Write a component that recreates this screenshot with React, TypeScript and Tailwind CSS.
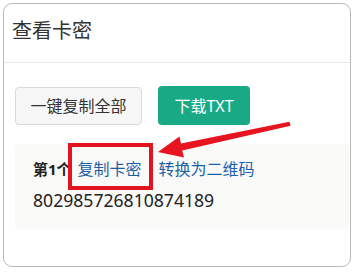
export default function App() {
  return (
    <div
      className="relative w-[354px] h-[272px] bg-white pt-[3px] pl-[3px] overflow-hidden"
      style={{ fontFamily: '"Noto Sans", "Noto Sans CJK SC", sans-serif' }}
    >
      <div className="w-[348px] h-[264px] border border-[#b8b8b8] rounded-[9px] bg-white">
        <div className="h-[59px] pl-[8px] pb-[4px] flex items-center border-b border-[#e6e6e6] text-[20px] text-[#333]">
          查看卡密
        </div>
        <div className="pl-[11px] pt-[24px]">
          <div className="flex gap-[16px]">
            <button className="h-[38px] w-[127px] rounded-[4px] border border-[#d9d9d9] bg-[#f6f6f6] text-[16px] text-[#333]">
              一键复制全部
            </button>
            <button className="h-[39px] w-[92px] -mt-px rounded-[4px] bg-[#1aa985] text-[16px] text-white">
              下载TXT
            </button>
          </div>
          <div className="mt-[19px] mr-[1px] h-[85px] rounded-[4px] bg-[#f9f9f8] pl-[18px] pt-[13px]">
            <div className="flex items-center h-[24px] text-[16px]">
              <span className="font-bold text-[15px] text-[#222]">第1个</span>
              <span className="ml-[6px] text-[#1d5fa6]">复制卡密</span>
              <span className="ml-[17px] text-[#1d5fa6]">转换为二维码</span>
            </div>
            <div className="mt-[5px] h-[28px] leading-[28px] text-[17.6px] text-[#222]">
              802985726810874189
            </div>
          </div>
        </div>
      </div>

      <div className="absolute left-[68px] top-[143px] w-[85px] h-[47px] border-[4px] border-[#e3141f]" />

      <svg className="absolute left-0 top-0" width="354" height="272" viewBox="0 0 354 272">
        <polygon
          points="158,152 179.4,136.6 181,143.6 289.4,121.8 290.6,125.8 182.2,150.4 184,157.4"
          fill="#e8141f"
        />
      </svg>
    </div>
  );
}
